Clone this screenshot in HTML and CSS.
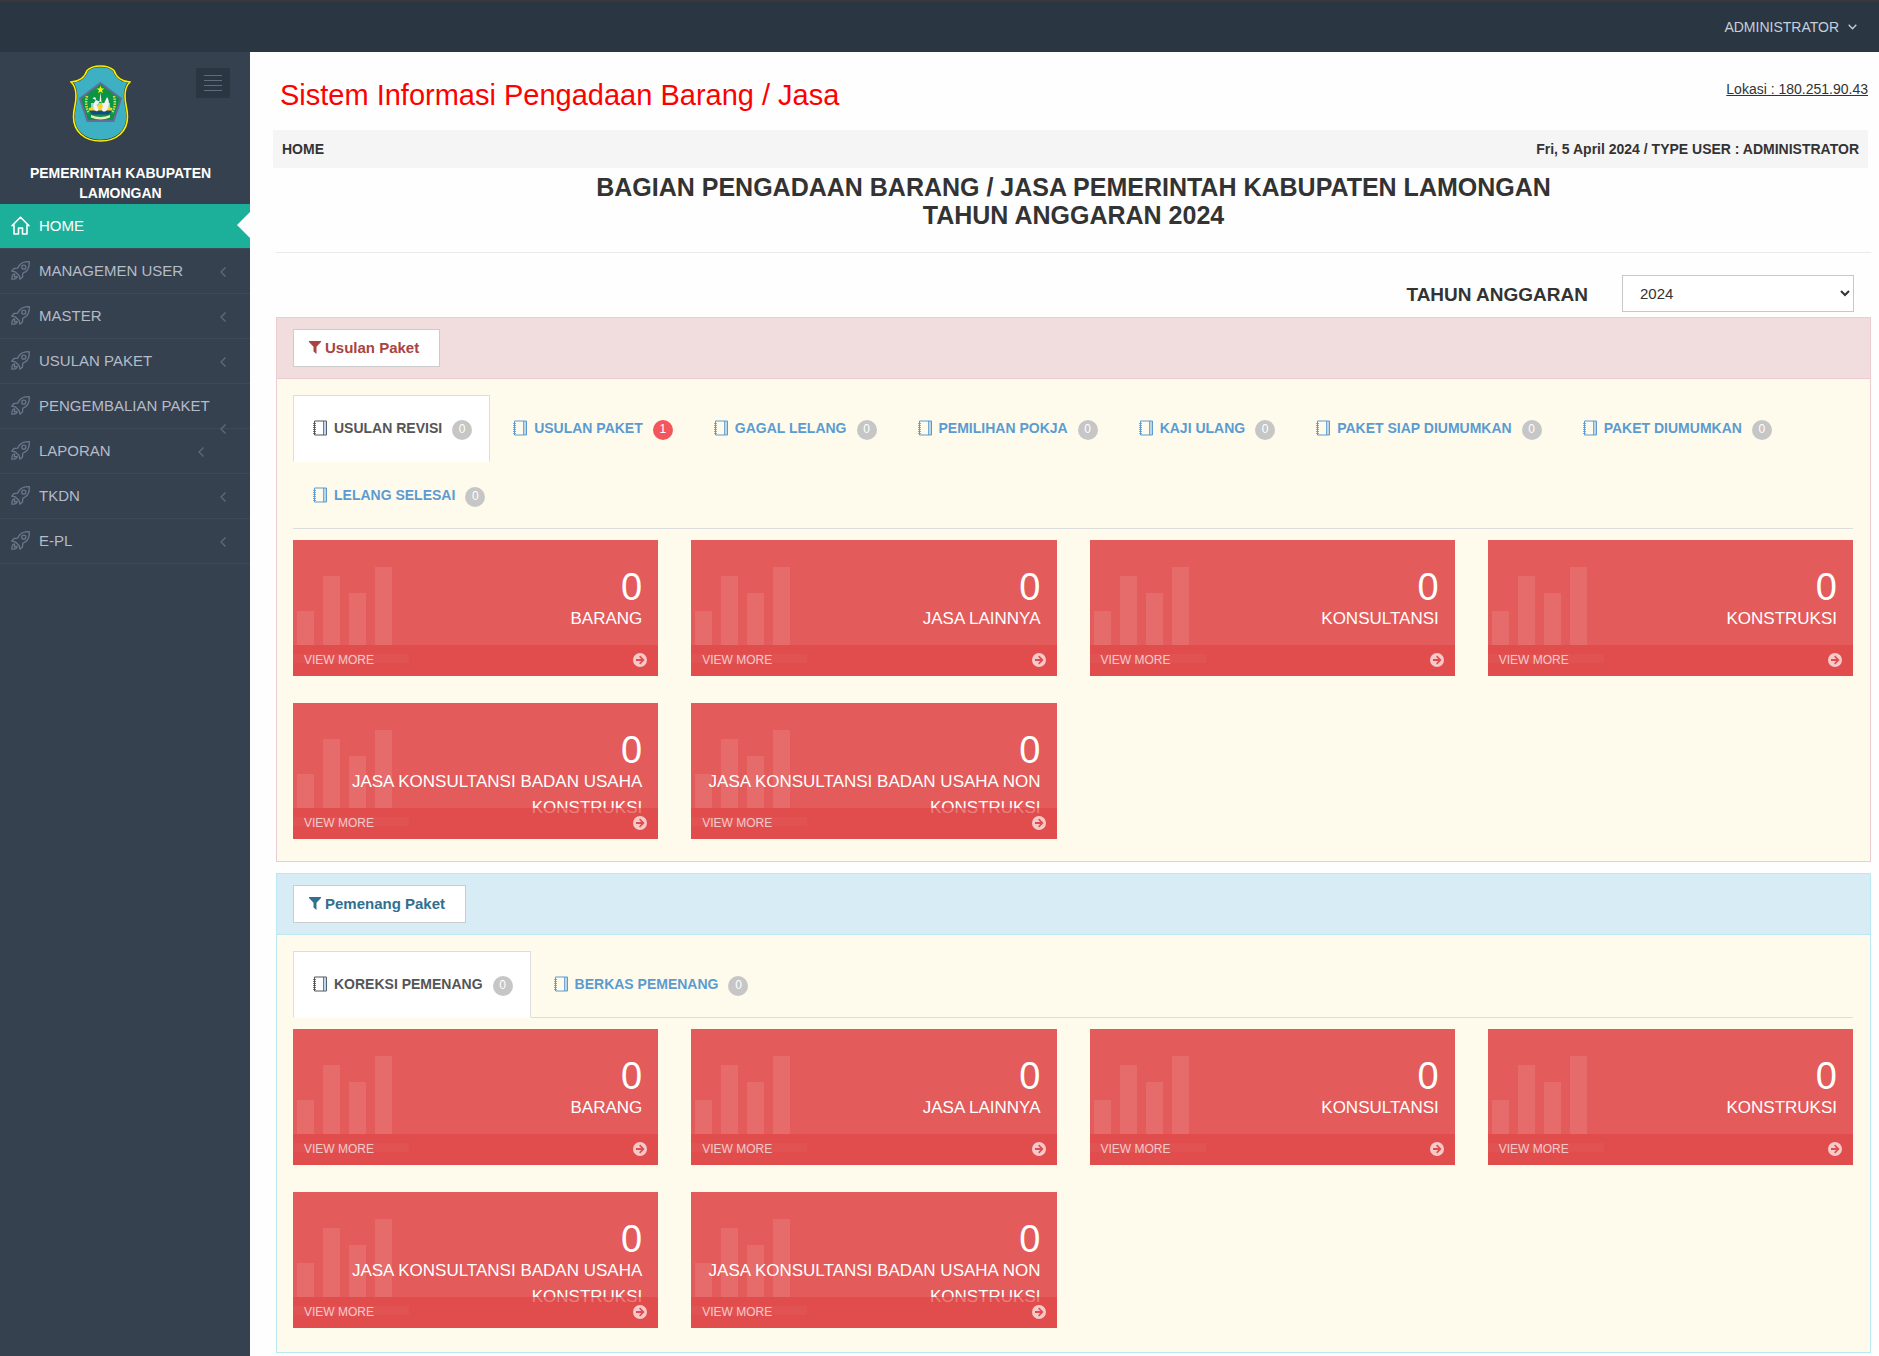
FILE: index.html
```
<!DOCTYPE html>
<html lang="id">
<head>
    <meta charset="UTF-8">
    <meta name="viewport" content="width=device-width, initial-scale=1.0">
    <title>Sistem Informasi Pengadaan Barang / Jasa</title>
    <link rel="stylesheet" href="styles.css">
</head>
<body>
    <!-- icon sprite -->
    <svg class="sprite" aria-hidden="true">
        <symbol id="i-home" viewBox="0 0 19 19">
            <path d="M1 9.800L9.500 1.200L18 9.800M3 9V18H7.500V12H11.500V18H16V9" fill="none" stroke="currentColor" stroke-width="1.600" stroke-linejoin="round" stroke-linecap="round"/>
        </symbol>
        <symbol id="i-rocket" viewBox="0 0 19 19">
            <g fill="none" stroke="currentColor" stroke-width="1.300" stroke-linejoin="round" stroke-linecap="round">
                <path d="M18.300 .7C13.500 .6 10.300 1.800 8.300 4.300L6.600 7.200L3 7.500L.8 10.200L4.200 10.800L8.200 14.800L8.900 18.200L11.500 15.900L11.800 12.300L14.700 10.600C17.300 8.600 18.500 5.400 18.300 .7Z"/>
                <circle cx="12.800" cy="6.200" r="2"/>
                <path d="M3.600 12.800C1.500 12.800 .8 14.800 .8 18.200C4.200 18.200 6.200 17.500 6.200 15.400C5.400 15.400 4.600 15.800 3.400 16C3.400 14.800 3.600 13.900 3.600 12.800Z"/>
            </g>
        </symbol>
        <symbol id="i-left" viewBox="0 0 6 10">
            <path d="M5.500 .5L1 5L5.500 9.500" fill="none" stroke="currentColor" stroke-width="1.200"/>
        </symbol>
        <symbol id="i-filter" viewBox="0 0 12 13">
            <path d="M0 0H12V1L7.500 5.800V13L4.500 10.500V5.800L0 1Z" fill="currentColor"/>
        </symbol>
        <symbol id="i-book" viewBox="0 0 14 16">
            <path d="M1.500 1H13.500V15H1.500Z" fill="none" stroke="currentColor" stroke-width="1"/>
            <path d="M10.500 1V15" stroke="currentColor" stroke-width="1" opacity=".8"/>
            <path d="M10.500 1H13.500V15H10.500Z" fill="#5b9bd1" opacity=".4"/>
            <path d="M0 3.500H3M0 5.500H3M0 7.500H3M0 9.500H3M0 11.500H3M0 13.500H3" stroke="currentColor" stroke-width=".8"/>
        </symbol>
        <symbol id="i-bars" viewBox="0 0 116 96">
            <path d="M4 44H21V78H4ZM30 9H47V78H30ZM56 26H73V78H56ZM82 0H99V78H82ZM0 87H116V96H0Z" fill="currentColor"/>
        </symbol>
        <symbol id="i-go" viewBox="0 0 14 14">
            <path fill-rule="evenodd" fill="currentColor" d="M7 0A7 7 0 1 1 7 14A7 7 0 1 1 7 0ZM7.200 2.600L6.100 3.700L8.200 5.900H3V8.100H8.200L6.100 10.300L7.200 11.400L11.600 7Z"/>
        </symbol>
    </svg>

    <header class="topbar">
        <a class="user" href="#">ADMINISTRATOR
            <svg class="user-caret" viewBox="0 0 9 6"><path d="M.7 .7L4.500 4.700L8.300 .7" fill="none" stroke="currentColor" stroke-width="1.300"/></svg>
        </a>
    </header>

    <div class="page">
        <aside class="sidebar">
            <div class="brand">
                <svg class="logo" viewBox="0 0 61 77" role="img" aria-label="Lamongan">
                    <path d="M30.500 1C24 1 19.500 3 17 5.500C15 12 9 16.500 1 17C5 20.500 6 25 6 31C6 41 3.500 42 3.500 52C3.500 66 14 76 30.500 76C47 76 57.500 66 57.500 52C57.500 42 55 41 55 31C55 25 56 20.500 60 17C52 16.500 46 12 44 5.500C41.500 3 37 1 30.500 1Z" fill="#3eb0c3" stroke="#333b2d" stroke-width="2.500"/>
                    <path d="M30.500 1C24 1 19.500 3 17 5.500C15 12 9 16.500 1 17C5 20.500 6 25 6 31C6 41 3.500 42 3.500 52C3.500 66 14 76 30.500 76C47 76 57.500 66 57.500 52C57.500 42 55 41 55 31C55 25 56 20.500 60 17C52 16.500 46 12 44 5.500C41.500 3 37 1 30.500 1Z" fill="none" stroke="#fff200" stroke-width="1.600"/>
                    <path d="M30.500 18L51 33.500L43.500 56H17.500L10 33.500Z" fill="#0a9443" stroke="#666b9c" stroke-width="2"/>
                    <path d="M30.500 20.500L31.500 23.500H34.500L32 25.300L33 28.300L30.500 26.500L28 28.300L29 25.300L26.500 23.500H29.500Z" fill="#fff200"/>
                    <path d="M17 31C15.500 37 16 43 19 48M44 31C45.500 37 45 43 42 48" fill="none" stroke="#d8dc4a" stroke-width="2.500" stroke-dasharray="1.500 1"/>
                    <path d="M21 38H40V43H21Z" fill="#8ed3ec"/>
                    <path d="M19 43L30.500 39L42 43V46H19Z" fill="#f7d417"/>
                    <path d="M19 45.500H42L39 49.500H22Z" fill="#124a86"/>
                    <path d="M22.500 33.500C24.500 31 27 32.500 25.500 35.500C23 39 22.500 42 25 45.500C27.500 47.500 29.500 45 28 42.500L26.500 40L29.500 37L30.500 27L31.500 37L33 41.500C30.500 44.500 32.500 48 36 46C39.500 42 40 36 37 32L34 38.500" fill="#f2f2f2"/>
                    <path d="M21 50C27 52.500 34 52.500 40 50V52.500C34 55 27 55 21 52.500Z" fill="#e7ecb0"/>
                </svg>
                <button class="toggler" type="button" aria-label="Toggle menu">
                    <svg viewBox="0 0 18 16"><path d="M0 .5H18M0 5.500H18M0 10.500H18M0 15.500H18" stroke="currentColor" stroke-width="1"/></svg>
                </button>
            </div>
            <p class="brand-name">PEMERINTAH KABUPATEN LAMONGAN</p>
            <nav>
                <ul class="menu">
                    <li class="active"><a href="#"><svg class="menu-icon"><use href="#i-home"/></svg><span class="title">HOME</span></a></li>
                    <li><a href="#"><svg class="menu-icon"><use href="#i-rocket"/></svg><span class="title">MANAGEMEN USER</span><span class="arrow"><svg><use href="#i-left"/></svg></span></a></li>
                    <li><a href="#"><svg class="menu-icon"><use href="#i-rocket"/></svg><span class="title">MASTER</span><span class="arrow"><svg><use href="#i-left"/></svg></span></a></li>
                    <li><a href="#"><svg class="menu-icon"><use href="#i-rocket"/></svg><span class="title">USULAN PAKET</span><span class="arrow"><svg><use href="#i-left"/></svg></span></a></li>
                    <li><a href="#"><svg class="menu-icon"><use href="#i-rocket"/></svg><span class="title">PENGEMBALIAN PAKET</span><span class="arrow"><svg><use href="#i-left"/></svg></span></a></li>
                    <li><a href="#"><svg class="menu-icon"><use href="#i-rocket"/></svg><span class="title">LAPORAN</span><span class="arrow"><svg><use href="#i-left"/></svg></span></a></li>
                    <li><a href="#"><svg class="menu-icon"><use href="#i-rocket"/></svg><span class="title">TKDN</span><span class="arrow"><svg><use href="#i-left"/></svg></span></a></li>
                    <li><a href="#"><svg class="menu-icon"><use href="#i-rocket"/></svg><span class="title">E-PL</span><span class="arrow"><svg><use href="#i-left"/></svg></span></a></li>
                </ul>
            </nav>
        </aside>

        <main class="content">
            <div class="page-head">
                <h1>Sistem Informasi Pengadaan Barang / Jasa</h1>
                <a class="lokasi" href="#">Lokasi : 180.251.90.43</a>
            </div>
            <div class="breadcrumb">
                <span>HOME</span>
                <span>Fri, 5 April 2024 / TYPE USER : ADMINISTRATOR</span>
            </div>
            <h2>BAGIAN PENGADAAN BARANG / JASA PEMERINTAH KABUPATEN LAMONGAN<br>TAHUN ANGGARAN 2024</h2>
            <hr>
            <div class="year">
                <label for="tahun">TAHUN ANGGARAN</label>
                <select id="tahun">
                    <option>2024</option>
                </select>
            </div>

            <section class="panel panel-danger">
                <div class="panel-heading">
                    <button class="btn" type="button"><svg><use href="#i-filter"/></svg>Usulan Paket</button>
                </div>
                <div class="panel-body">
                    <ul class="tabs">
                        <li class="active"><a href="#"><svg><use href="#i-book"/></svg>USULAN REVISI<span class="badge">0</span></a></li>
                        <li><a href="#"><svg><use href="#i-book"/></svg>USULAN PAKET<span class="badge badge-danger">1</span></a></li>
                        <li><a href="#"><svg><use href="#i-book"/></svg>GAGAL LELANG<span class="badge">0</span></a></li>
                        <li><a href="#"><svg><use href="#i-book"/></svg>PEMILIHAN POKJA<span class="badge">0</span></a></li>
                        <li><a href="#"><svg><use href="#i-book"/></svg>KAJI ULANG<span class="badge">0</span></a></li>
                        <li><a href="#"><svg><use href="#i-book"/></svg>PAKET SIAP DIUMUMKAN<span class="badge">0</span></a></li>
                        <li><a href="#"><svg><use href="#i-book"/></svg>PAKET DIUMUMKAN<span class="badge">0</span></a></li>
                        <li><a href="#"><svg><use href="#i-book"/></svg>LELANG SELESAI<span class="badge">0</span></a></li>
                    </ul>
                    <div class="stats">
                        <div class="stat">
                            <svg class="visual"><use href="#i-bars"/></svg>
                            <div class="details"><div class="number">0</div><div class="desc">BARANG</div></div>
                            <a class="more" href="#">VIEW MORE<svg><use href="#i-go"/></svg></a>
                        </div>
                        <div class="stat">
                            <svg class="visual"><use href="#i-bars"/></svg>
                            <div class="details"><div class="number">0</div><div class="desc">JASA LAINNYA</div></div>
                            <a class="more" href="#">VIEW MORE<svg><use href="#i-go"/></svg></a>
                        </div>
                        <div class="stat">
                            <svg class="visual"><use href="#i-bars"/></svg>
                            <div class="details"><div class="number">0</div><div class="desc">KONSULTANSI</div></div>
                            <a class="more" href="#">VIEW MORE<svg><use href="#i-go"/></svg></a>
                        </div>
                        <div class="stat">
                            <svg class="visual"><use href="#i-bars"/></svg>
                            <div class="details"><div class="number">0</div><div class="desc">KONSTRUKSI</div></div>
                            <a class="more" href="#">VIEW MORE<svg><use href="#i-go"/></svg></a>
                        </div>
                        <div class="stat">
                            <svg class="visual"><use href="#i-bars"/></svg>
                            <div class="details"><div class="number">0</div><div class="desc">JASA KONSULTANSI BADAN USAHA KONSTRUKSI</div></div>
                            <a class="more" href="#">VIEW MORE<svg><use href="#i-go"/></svg></a>
                        </div>
                        <div class="stat">
                            <svg class="visual"><use href="#i-bars"/></svg>
                            <div class="details"><div class="number">0</div><div class="desc">JASA KONSULTANSI BADAN USAHA NON KONSTRUKSI</div></div>
                            <a class="more" href="#">VIEW MORE<svg><use href="#i-go"/></svg></a>
                        </div>
                    </div>
                </div>
            </section>

            <section class="panel panel-info">
                <div class="panel-heading">
                    <button class="btn" type="button"><svg><use href="#i-filter"/></svg>Pemenang Paket</button>
                </div>
                <div class="panel-body">
                    <ul class="tabs">
                        <li class="active"><a href="#"><svg><use href="#i-book"/></svg>KOREKSI PEMENANG<span class="badge">0</span></a></li>
                        <li><a href="#"><svg><use href="#i-book"/></svg>BERKAS PEMENANG<span class="badge">0</span></a></li>
                    </ul>
                    <div class="stats">
                        <div class="stat">
                            <svg class="visual"><use href="#i-bars"/></svg>
                            <div class="details"><div class="number">0</div><div class="desc">BARANG</div></div>
                            <a class="more" href="#">VIEW MORE<svg><use href="#i-go"/></svg></a>
                        </div>
                        <div class="stat">
                            <svg class="visual"><use href="#i-bars"/></svg>
                            <div class="details"><div class="number">0</div><div class="desc">JASA LAINNYA</div></div>
                            <a class="more" href="#">VIEW MORE<svg><use href="#i-go"/></svg></a>
                        </div>
                        <div class="stat">
                            <svg class="visual"><use href="#i-bars"/></svg>
                            <div class="details"><div class="number">0</div><div class="desc">KONSULTANSI</div></div>
                            <a class="more" href="#">VIEW MORE<svg><use href="#i-go"/></svg></a>
                        </div>
                        <div class="stat">
                            <svg class="visual"><use href="#i-bars"/></svg>
                            <div class="details"><div class="number">0</div><div class="desc">KONSTRUKSI</div></div>
                            <a class="more" href="#">VIEW MORE<svg><use href="#i-go"/></svg></a>
                        </div>
                        <div class="stat">
                            <svg class="visual"><use href="#i-bars"/></svg>
                            <div class="details"><div class="number">0</div><div class="desc">JASA KONSULTANSI BADAN USAHA KONSTRUKSI</div></div>
                            <a class="more" href="#">VIEW MORE<svg><use href="#i-go"/></svg></a>
                        </div>
                        <div class="stat">
                            <svg class="visual"><use href="#i-bars"/></svg>
                            <div class="details"><div class="number">0</div><div class="desc">JASA KONSULTANSI BADAN USAHA NON KONSTRUKSI</div></div>
                            <a class="more" href="#">VIEW MORE<svg><use href="#i-go"/></svg></a>
                        </div>
                    </div>
                </div>
            </section>
        </main>
    </div>
</body>
</html>
```
FILE: styles.css
```
* {
    box-sizing: border-box;
}
body {
    display: flex;
    flex-direction: column;
    min-height: 100vh;
    margin: 0;
    font-family: "Liberation Sans", Arial, sans-serif;
    font-size: 14px;
    line-height: 20px;
    color: #333;
    background-color: #fefefe;
}
h1, h2, p, ul {
    margin: 0;
    padding: 0;
}
ul {
    list-style: none;
}
a {
    color: inherit;
    text-decoration: none;
}
.sprite {
    display: none;
}

/* top bar */
.topbar {
    display: flex;
    justify-content: flex-end;
    align-items: center;
    height: 52px;
    padding-right: 22px;
    border-top: 2px solid #3a383b;
    background-color: #2b3643;
}
.user {
    display: flex;
    align-items: center;
    gap: 9px;
    color: #c6cfda;
}
.user-caret {
    width: 9px;
    height: 6px;
}
.page {
    display: flex;
    flex: 1;
}

/* sidebar */
.sidebar {
    flex: 0 0 250px;
    background-color: #364150;
}
.brand {
    display: flex;
    justify-content: space-between;
    align-items: flex-start;
    padding: 13px 20px 0 70px;
}
.logo {
    width: 61px;
    height: 77px;
}
.toggler {
    display: flex;
    align-items: center;
    justify-content: center;
    width: 34px;
    height: 30px;
    margin-top: 3px;
    padding: 0;
    border: 0;
    color: #606c7d;
    background-color: #2b3643;
}
.toggler svg {
    width: 18px;
    height: 16px;
}
.brand-name {
    padding: 21px 9px 1px 0;
    font-weight: bold;
    text-align: center;
    color: #fff;
}
.menu li {
    position: relative;
    border-bottom: 1px solid #3d4957;
}
.menu a {
    display: block;
    padding: 11px 16px 11px 11px;
    font-size: 15px;
    line-height: 22px;
    color: #b4bcc8;
}
.menu-icon {
    width: 19px;
    height: 19px;
    margin-right: 9px;
    vertical-align: -4px;
    color: #69778a;
}
.title {
    padding-right: 8px;
}
.arrow {
    display: flex;
    float: right;
    align-items: center;
    justify-content: center;
    width: 22px;
    height: 24px;
    color: #606c7d;
}
.arrow svg {
    width: 6px;
    height: 10px;
}
.menu .active a {
    color: #fff;
    background-color: #1caf9a;
}
.menu .active .menu-icon {
    color: #fff;
}
/* notch pointing at the content */
.menu .active::after {
    content: "";
    position: absolute;
    top: 8px;
    right: 0;
    border: 13px solid transparent;
    border-left-width: 0;
    border-right-color: #fefefe;
}

/* content */
.content {
    flex: 1;
    min-width: 0;
    padding: 0 8px 3px 26px;
}
.page-head {
    display: flex;
    justify-content: space-between;
    height: 78px;
    padding: 27px 3px 0 4px;
}
h1 {
    font-size: 29px;
    font-weight: normal;
    line-height: 32px;
    color: #f00;
}
.lokasi {
    text-decoration: underline;
}
.breadcrumb {
    display: flex;
    justify-content: space-between;
    margin: 0 3px 0 -3px;
    padding: 9px;
    font-weight: bold;
    background-color: #f5f5f5;
}
h2 {
    padding: 5px 0 23px;
    font-size: 25px;
    line-height: 28px;
    text-align: center;
}
hr {
    margin: 0;
    border: 0;
    border-top: 1px solid #eaeaea;
}
.year {
    display: flex;
    justify-content: flex-end;
    align-items: center;
    gap: 34px;
    padding: 22px 17px 5px 0;
}
.year label {
    padding-top: 2px;
    font-size: 19px;
    font-weight: bold;
}
.year select {
    width: 232px;
    height: 37px;
    padding: 6px 0 6px 13px;
    border: 1px solid #c8c8c8;
    font-family: inherit;
    font-size: 15px;
    color: #333;
    background-color: #fff;
}

/* panels */
.panel {
    margin-bottom: 11px;
    border: 1px solid;
    background-color: #fffbec;
}
.panel:last-child {
    margin-bottom: 0;
}
.panel-heading {
    padding: 11px 16px;
    border-bottom: 1px solid;
}
.panel-danger, .panel-danger .panel-heading {
    border-color: #ebccd1;
}
.panel-danger .panel-heading {
    color: #a94442;
    background-color: #f1dcde;
}
.panel-info, .panel-info .panel-heading {
    border-color: #bce8f1;
}
.panel-info .panel-heading {
    color: #31708f;
    background-color: #d8ecf5;
}
.panel-body {
    padding: 16px 17px 22px 16px;
}
.panel-info .panel-body {
    padding-bottom: 24px;
}
.btn {
    display: flex;
    align-items: center;
    gap: 4px;
    height: 38px;
    padding: 0 20px 2px 15px;
    border: 1px solid #ccc;
    font-family: inherit;
    font-size: 15px;
    font-weight: bold;
    color: inherit;
    background-color: #fff;
}
.btn svg {
    width: 12px;
    height: 13px;
}

/* tabs */
.tabs {
    display: flex;
    flex-wrap: wrap;
    gap: 1px 3px;
    margin-bottom: 11px;
    border-bottom: 1px solid #ddd;
}
.tabs li {
    margin-bottom: -1px;
}
.tabs a {
    display: flex;
    align-items: center;
    gap: 7px;
    height: 67px;
    padding: 0 17px 2px 19px;
    border: 1px solid transparent;
    font-weight: bold;
    color: #5b9bd1;
}
.tabs svg {
    width: 14px;
    height: 16px;
}
.tabs .active a {
    border-color: #ddd;
    border-bottom-color: #fff;
    color: #555;
    background-color: #fff;
}
.badge {
    width: 20px;
    height: 20px;
    margin: 4px 0 0 3px;
    border-radius: 50%;
    font-size: 12px;
    font-weight: normal;
    line-height: 19px;
    text-align: center;
    color: #fff;
    background-color: #c6c6c6;
}
.badge-danger {
    background-color: #f3565d;
}

/* stat cards */
.stats {
    display: grid;
    grid-template-columns: repeat(4, 1fr);
    gap: 27px 33px;
}
.stat {
    display: flex;
    flex-direction: column;
    position: relative;
    height: 136px;
    overflow: hidden;
    color: #fff;
    background-color: #e35b5a;
}
.visual {
    position: absolute;
    top: 27px;
    left: 0;
    width: 116px;
    height: 96px;
    opacity: .1;
}
.details {
    position: relative;
    height: 105px;
    padding: 28px 16px 0 0;
    text-align: right;
}
.number {
    font-size: 38px;
    line-height: 38px;
}
.desc {
    font-size: 17px;
    line-height: 26px;
}
/* translucent, long descriptions run under it */
.more {
    display: flex;
    justify-content: space-between;
    align-items: center;
    position: relative;
    height: 31px;
    padding: 0 11px 2px;
    font-size: 12px;
    color: rgba(255, 255, 255, .7);
    background-color: rgba(223, 71, 71, .7);
}
.more svg {
    width: 14px;
    height: 14px;
}
```
